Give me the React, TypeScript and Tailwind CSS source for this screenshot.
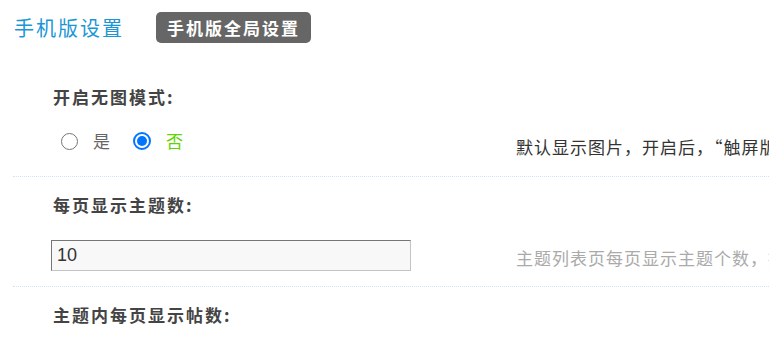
import React from "react";

const cjk = { fontFamily: '"Noto Sans CJK SC", "Noto Sans", sans-serif' };

function Row({
  label,
  control,
  desc,
  descClass,
  pt,
  gap,
  pb,
}: {
  label: string;
  control: React.ReactNode;
  desc?: string;
  descClass?: string;
  pt: string;
  gap: string;
  pb: string;
}) {
  return (
    <div className={`flex items-end border-b border-dotted border-[#cfe5f2] ${pt} ${pb}`}>
      <div className="w-[503px] shrink-0 pl-[40px]">
        <div className="h-[28px] leading-[28px] text-[17px] font-bold tracking-[2px] text-[#444]">{label}</div>
        <div className={`${gap} h-[30px] flex items-center`}>{control}</div>
      </div>
      {desc && (
        <div className={`flex-1 min-w-0 overflow-hidden whitespace-nowrap h-[30px] leading-[30px] text-[17px] tracking-[1px] ${descClass}`}>
          {desc}
        </div>
      )}
    </div>
  );
}

function Radio({ checked }: { checked?: boolean }) {
  return checked ? (
    <span className="w-[18px] h-[18px] rounded-full border-2 border-[#0075ff] bg-white flex items-center justify-center">
      <span className="w-[10px] h-[10px] rounded-full bg-[#0075ff]" />
    </span>
  ) : (
    <span className="w-[17px] h-[17px] rounded-full border-[1.5px] border-[#767676] bg-white" />
  );
}

export default function App() {
  return (
    <div className="w-[769px] h-[339px] overflow-hidden bg-white" style={cjk}>
      <div className="flex items-center pt-[12px] pl-[14px] h-[43px]">
        <h2 className="text-[20px] leading-[31px] tracking-[2px] text-[#1a96d6]">手机版设置</h2>
        <span className="ml-[32px] h-[31px] px-[11px] rounded-[5px] bg-[#666] text-white text-[17px] font-bold leading-[31px] tracking-[2px]">
          手机版全局设置
        </span>
      </div>

      <div className="pl-[13px] pt-[26px]">
        <Row
          pt="pt-[14px]"
          gap="mt-[15px]"
          pb="pb-[20px]"
          label="开启无图模式:"
          control={
            <div className="flex items-center text-[17px] pl-[8px]">
              <label className="flex items-center">
                <Radio />
                <span className="ml-[15px] text-[#666]">是</span>
              </label>
              <label className="flex items-center ml-[23px]">
                <Radio checked />
                <span className="ml-[15px] text-[#5fd400]">否</span>
              </label>
            </div>
          }
          desc="默认显示图片，开启后，“触屏版”将不显示图片，只显示文字内容"
          descClass="text-[#333] -mb-[6px]"
        />
        <Row
          pt="pt-[14px]"
          gap="mt-[21px]"
          pb="pb-[16px]"
          label="每页显示主题数:"
          control={
            <input
              defaultValue="10"
              className="-ml-[2px] w-[360px] h-[31px] bg-[#f8f8f8] border border-t-[#767676] border-l-[#767676] border-r-[#c4c4c4] border-b-[#c4c4c4] px-[5px] text-[18px] text-[#333] outline-none"
              style={{ fontFamily: '"Liberation Sans", Arial, sans-serif' }}
            />
          }
          desc="主题列表页每页显示主题个数，推荐值为 10"
          descClass="text-[#aaa] -mb-[3px]"
        />
        <div className="pl-[40px] pt-[14px] h-[28px] leading-[28px] text-[17px] font-bold tracking-[2px] text-[#444]">
          主题内每页显示帖数:
        </div>
      </div>
    </div>
  );
}
